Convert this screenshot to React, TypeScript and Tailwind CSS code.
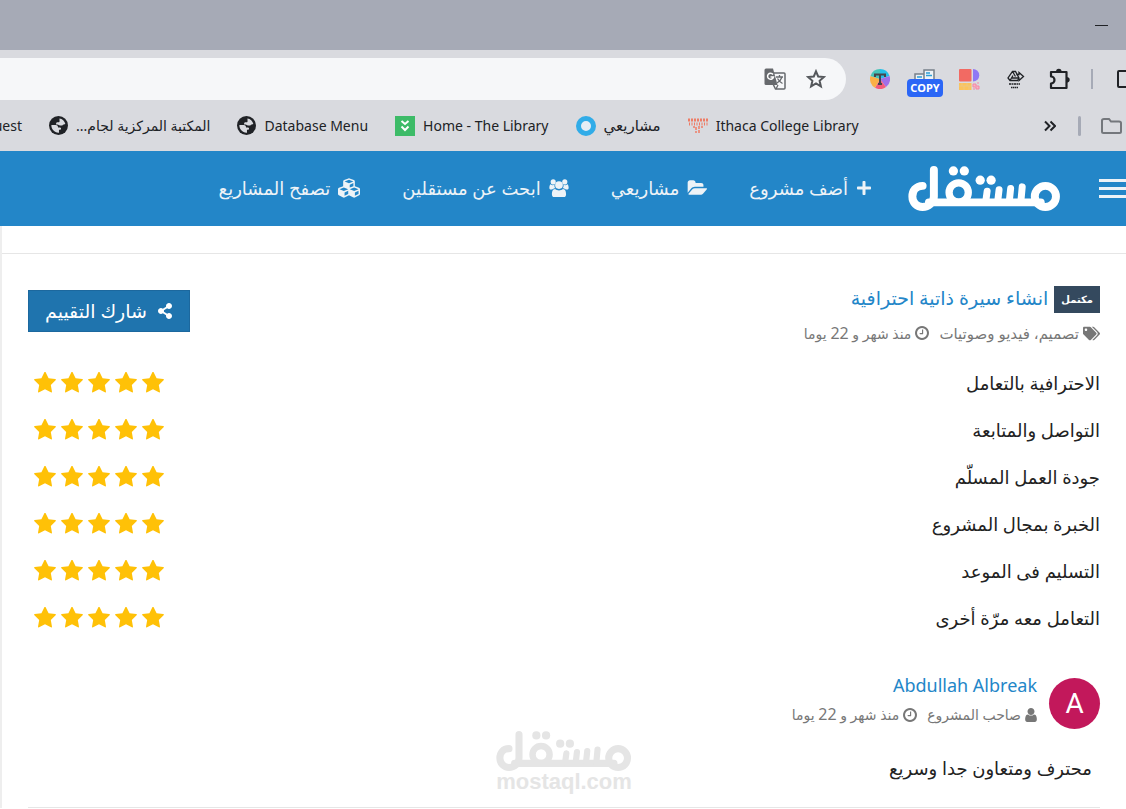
import type { ReactNode } from "react";
import { FaCubes, FaPlus, FaShareAlt, FaTags } from "react-icons/fa";

type IconProps = { className?: string };

const UI_FONT = "font-['Noto_Sans','DejaVu_Sans',sans-serif]";

const Logo = ({ className = "" }: IconProps) => (
  <svg
    viewBox="0 0 460 136"
    className={className}
    fill="none"
    stroke="currentColor"
    strokeLinecap="round"
    aria-hidden="true"
  >
    <circle cx="414" cy="92" r="32" strokeWidth="24" />
    <circle cx="152" cy="80" r="29" strokeWidth="22" />
    <path
      d="M43 60C22 60 12 76 12 92C12 111 26 124 43 124C60 124 77 111 77 92V12M62 110H400"
      strokeWidth="24"
    />
    <path d="M344 63L340 106M309 68L305 106M274 72L270 106M238 76L234 106" strokeWidth="21" />
    <g fill="currentColor" stroke="none">
      <circle cx="136" cy="15" r="14" />
      <circle cx="169" cy="15" r="14" />
      <circle cx="217" cy="43" r="14" />
      <circle cx="250" cy="43" r="14" />
    </g>
  </svg>
);

const Star = ({ className = "" }: IconProps) => (
  <svg viewBox="64 60 1664 1600" className={className} fill="currentColor" aria-hidden="true">
    <path d="M1728 647q0 22-26 48l-363 354 86 500q1 7 1 20 0 21-10.5 35.5t-30.5 14.5q-19 0-40-12l-449-236-449 236q-22 12-40 12-21 0-31.5-14.5t-10.5-35.5q0-6 2-20l86-500-364-354q-25-27-25-48 0-37 56-46l502-73 225-455q19-41 49-41t49 41l225 455 502 73q56 9 56 46z" />
  </svg>
);

const Clock = ({ className = "" }: IconProps) => (
  <svg viewBox="128 128 1536 1536" className={className} fill="currentColor" aria-hidden="true">
    <path d="M1024 544v448q0 14-9 23t-23 9h-320q-14 0-23-9t-9-23v-64q0-14 9-23t23-9h224v-352q0-14 9-23t23-9h64q14 0 23 9t9 23zm416 352q0-148-73-273t-198-198-273-73-273 73-198 198-73 273 73 273 198 198 273 73 273-73 198-198 73-273zm224 0q0 209-103 385.5t-279.5 279.5-385.5 103-385.5-103-279.5-279.5-103-385.5 103-385.5 279.5-279.5 385.5-103 385.5 103 279.5 279.5 103 385.5z" />
  </svg>
);

const Person = ({ className = "" }: IconProps) => (
  <svg viewBox="256 128 1280 1536" className={className} fill="currentColor" aria-hidden="true">
    <path d="M1536 1399q0 109-62.5 187t-150.5 78h-854q-88 0-150.5-78t-62.5-187q0-85 8.5-160.5t31.5-152 58.5-131 94-89 134.5-34.5q131 128 313 128t313-128q76 0 134.5 34.5t94 89 58.5 131 31.5 152 8.5 160.5zm-256-887q0 159-112.5 271.5t-271.5 112.5-271.5-112.5-112.5-271.5 112.5-271.5 271.5-112.5 271.5 112.5 112.5 271.5z" />
  </svg>
);

const FolderOpen = ({ className = "" }: IconProps) => (
  <svg viewBox="0 128 1944 1408" className={className} fill="currentColor" aria-hidden="true">
    <path d="M1943 952q0 31-31 66l-336 396q-43 51-120.5 86.5t-143.5 35.5h-1088q-34 0-60.5-13t-26.5-43q0-31 31-66l336-396q43-51 120.5-86.5t143.5-35.5h1088q34 0 60.5 13t26.5 43zm-343-344v160h-832q-94 0-197 47.5t-164 119.5l-337 396-5 6q0-4-.5-12.5t-.5-12.5v-960q0-92 66-158t158-66h320q92 0 158 66t66 158v32h544q92 0 158 66t66 158z" />
  </svg>
);

const Group = ({ className = "" }: IconProps) => (
  <svg viewBox="0 0 60 56" className={className} fill="currentColor" aria-hidden="true">
    <circle cx="12" cy="9" r="8" />
    <circle cx="48" cy="9" r="8" />
    <circle cx="30" cy="19" r="12" />
    <path d="M4 16C7 20 12 20 16 18C15 23 17 27 19 29C14 29 11 31 9 33H5C1 33 0 30 0 27C0 22 1 18 4 16Z" />
    <path d="M56 16C53 20 48 20 44 18C45 23 43 27 41 29C46 29 49 31 51 33H55C59 33 60 30 60 27C60 22 59 18 56 16Z" />
    <path d="M18 31C25 37 35 37 42 31C50 31 52 40 52 48C52 53 49 56 45 56H15C11 56 8 53 8 48C8 40 10 31 18 31Z" />
  </svg>
);

const Globe = () => (
  <svg viewBox="0 0 20 20" className="size-[19px] shrink-0" aria-hidden="true">
    <circle cx="10" cy="10" r="10" fill="#202226" />
    <path
      d="M11 2.500C14 3 16.500 5 17.200 8.500C16 9 15 9 14 10H11.500C10.500 10 10 9 9 9H7.500V7.500C7.500 6.500 9 6.500 10.500 6.500C11.500 6.500 11 4.500 11 2.500Z"
      fill="#d9dadf"
    />
    <path
      d="M2.500 9.500H7C9 9.500 9.500 10.500 9.500 12H11.500C13 12 13 14 12 14.500H10.500V17.500C6 17.800 2.300 14 2.500 9.500Z"
      fill="#d9dadf"
    />
  </svg>
);

const TranslateIcon = () => (
  <svg viewBox="0 0 22 22" className="size-[22px]" aria-hidden="true">
    <path d="M9 5H20Q21 5 21 6V20Q21 21 20 21H11.500L9 16" fill="none" stroke="#66696d" strokeWidth="1.500" />
    <path d="M2 0.500H9L13.500 17H2Q0.500 17 0.500 15.500V2Q0.500 0.500 2 0.500Z" fill="#66696d" />
    <path d="M9 6.500A3 3 0 1 0 9.500 9H6.500" fill="none" stroke="#fff" strokeWidth="1.500" />
    <path d="M12 9H19M15.500 7V9M18 9C17 12 15 14 13 15M13.500 10.500C15 13 16.500 14.500 18.500 15.500M12 21L14 17" fill="none" stroke="#66696d" strokeWidth="1.300" />
  </svg>
);

const BookmarkStar = () => (
  <svg viewBox="0 0 20 20" className="size-5" fill="none" stroke="#55585c" strokeWidth="2" aria-hidden="true">
    <path d="M10 2.300L12.200 7.500L17.900 8L13.600 11.800L14.900 17.400L10 14.400L5.100 17.400L6.400 11.800L2.100 8L7.800 7.500Z" />
  </svg>
);

const TextIcon = () => (
  <svg viewBox="0 0 20 20" className="size-5" aria-hidden="true">
    <path d="M10 10V0A10 10 0 0 1 19.500 7Z" fill="#25bfe8" />
    <path d="M10 10L19.500 7A10 10 0 0 1 16 18Z" fill="#a06ee8" />
    <path d="M10 10L16 18A10 10 0 0 1 5 18.700Z" fill="#f45b7a" />
    <path d="M10 10L5 18.700A10 10 0 0 1 0.500 7Z" fill="#fbb045" />
    <path d="M10 10L0.500 7A10 10 0 0 1 10 0Z" fill="#46c5b9" />
    <path d="M5 8V5.500H15V8M10 5.500V15M8 15H12" fill="none" stroke="#46464c" strokeWidth="2" />
  </svg>
);

const CopyIcon = () => (
  <span className="flex w-9 flex-col items-center">
    <svg viewBox="0 0 22 10" className="h-[10px] w-[22px]" aria-hidden="true">
      <path d="M1 10V5H10V10M10 10V1H20V10" fill="#eef3f7" stroke="#77808a" strokeWidth="1.500" />
      <path d="M12 4H16M12 6.500H18M3 8H8" stroke="#2d9fd8" strokeWidth="1.500" />
    </svg>
    <span className="h-[18px] w-full rounded bg-[#2b66f6] text-center text-[11px] leading-[18px] font-bold text-white">
      COPY
    </span>
  </span>
);

const BlocksIcon = () => (
  <svg viewBox="0 0 21 21" className="size-[21px]" aria-hidden="true">
    <rect width="12.500" height="12.500" rx="1" fill="#f26a63" />
    <path d="M14 0A6.200 6.200 0 0 1 14 12.500Z" fill="#8f78f4" />
    <rect y="14" width="12.500" height="7" fill="#fbc35c" />
    <path d="M0 17H12M3 14V17M8 14V17M5 17V21M10 17V21" stroke="#e8c88e" strokeWidth="0.700" />
    <path d="M14 15H17V17H20V20H17V18H14ZM18 14H20M14 20H16" stroke="#f387a4" strokeWidth="1" fill="#f9b2c4" />
  </svg>
);

const DriveIcon = () => (
  <svg viewBox="0 0 18 19" className="h-[19px] w-[18px]" fill="none" stroke="#202226" aria-hidden="true">
    <path d="M5.500 1.500H8.500L12 8L10.500 10.500H3L1 8ZM5.500 1.500L8.500 6.500M3 10.500L6 5.500M5 8H12" strokeWidth="1.300" />
    <path d="M9.500 4.500H12V2.500L16.500 6.500L12 10.500V8.500" strokeWidth="1.300" />
    <path d="M2 14H13" strokeWidth="1.500" strokeDasharray="2 0.500" />
    <path d="M4 17.500H11" strokeWidth="1.500" strokeDasharray="1.500 0.500" />
  </svg>
);

const PuzzleIcon = () => (
  <svg viewBox="0 0 22 22" className="size-[22px]" aria-hidden="true">
    <path
      d="M2 4H17.500V20H2V15.500A3.300 3.300 0 0 0 2 8.500Z"
      fill="none"
      stroke="#202226"
      strokeWidth="2.200"
      strokeLinejoin="round"
    />
    <path d="M7 4A2.800 3.200 0 0 1 12.600 4ZM17.500 9A3.200 2.800 0 0 1 17.500 14.600Z" fill="#202226" />
  </svg>
);

const Toolbar = () => (
  <div className="flex h-[58px] items-center overflow-hidden">
    <div className="flex h-[42px] flex-1 items-center justify-end gap-5 rounded-r-full bg-[#f6f7f9] pr-5">
      <button type="button" aria-label="Translate this page">
        <TranslateIcon />
      </button>
      <button type="button" aria-label="Bookmark this tab">
        <BookmarkStar />
      </button>
    </div>
    <div className="flex w-[280px] shrink-0 items-center pl-6">
      <button type="button" aria-label="Text tools" className="mr-[17px] shrink-0">
        <TextIcon />
      </button>
      <button type="button" className="mt-2 mr-4 shrink-0">
        <CopyIcon />
      </button>
      <button type="button" aria-label="Blocks" className="mr-[27px] shrink-0">
        <BlocksIcon />
      </button>
      <button type="button" aria-label="Preview export" className="mr-6 shrink-0">
        <DriveIcon />
      </button>
      <button type="button" aria-label="Extensions" className="mr-5 shrink-0">
        <PuzzleIcon />
      </button>
      <span className="mr-6 h-5 w-0.5 shrink-0 bg-[#a6aab6]" />
      <button type="button" aria-label="Side panel" className="h-[18px] w-5 shrink-0 rounded-xs border-2 border-[#202226]" />
    </div>
  </div>
);

const Bookmark = ({ icon, children }: { icon: ReactNode; children: ReactNode }) => (
  <a href="#" className="flex shrink-0 items-center gap-2 whitespace-nowrap">
    {icon}
    {children}
  </a>
);

const BookmarksBar = () => (
  <div className="flex h-[43px] items-center justify-between overflow-hidden pb-[7px] text-sm text-[#202226]">
    <div className="flex items-center gap-[27px]">
      <a href="#" className="flex w-[22px] shrink-0 justify-end">
        uest
      </a>
      <Bookmark icon={<Globe />}>
        <span dir="rtl">المكتبة المركزية لجام...</span>
      </Bookmark>
      <Bookmark icon={<Globe />}>Database Menu</Bookmark>
      <Bookmark
        icon={
          <svg viewBox="0 0 20 20" className="size-5" aria-hidden="true">
            <rect width="20" height="20" fill="#3dbb68" />
            <path d="M6.500 5L10 8L13.500 5M6.500 10.500L10 14L13.500 10.500" fill="none" stroke="#fff" strokeWidth="2" />
          </svg>
        }
      >
        Home - The Library
      </Bookmark>
      <Bookmark icon={<span className="size-5 rounded-full border-[5px] border-[#31ace8] bg-[#e6edf5]" />}>
        <span dir="rtl" className="text-[15px]">
          مشاريعي
        </span>
      </Bookmark>
      <Bookmark
        icon={
          <svg viewBox="0 0 20 16" className="h-4 w-5" fill="none" stroke="#ee7c66" aria-hidden="true">
            <path d="M0 2H20" strokeWidth="3" strokeDasharray="2 1" />
            <path d="M1 6H20" strokeWidth="3" strokeDasharray="1 1.500" />
            <path d="M8 9V15M11 8V15M14 8V10M6 8V10" strokeWidth="1.500" strokeDasharray="3 1" />
          </svg>
        }
      >
        Ithaca College Library
      </Bookmark>
    </div>
    <div className="flex shrink-0 items-center pr-1">
      <button type="button" aria-label="More bookmarks" className="mr-[22px]">
        <svg viewBox="0 0 12 12" className="size-3" fill="none" stroke="#202226" strokeWidth="2" aria-hidden="true">
          <path d="M1 1.500L5.500 6L1 10.500M6.500 1.500L11 6L6.500 10.500" />
        </svg>
      </button>
      <span className="mr-5 h-5 w-[3px] rounded-full bg-[#a6aab6]" />
      <button type="button" aria-label="All bookmarks">
        <svg viewBox="0 0 21 16" className="h-4 w-[21px]" fill="none" stroke="#74777c" strokeWidth="2" aria-hidden="true">
          <path d="M3 1H8L10 3.500H18Q20 3.500 20 5V13.500Q20 15 18.500 15H2.500Q1 15 1 13.500V2.500Q1 1 3 1Z" />
        </svg>
      </button>
    </div>
  </div>
);

const navItems = [
  { label: "أضف مشروع", icon: <FaPlus className="size-4" /> },
  { label: "مشاريعي", icon: <FolderOpen className="h-[15px] w-5" /> },
  { label: "ابحث عن مستقلين", icon: <Group className="h-[18px] w-5" /> },
  { label: "تصفح المشاريع", icon: <FaCubes className="size-[22px]" /> },
];

const SiteHeader = () => (
  <header className="flex h-[75px] items-center overflow-hidden bg-[#2386c8] text-[#eef3f7]">
    <button type="button" aria-label="القائمة" className="flex w-[27px] shrink-0 flex-col gap-[5px]">
      <span className="h-[3px] bg-current" />
      <span className="h-[3px] bg-current" />
      <span className="h-[3px] bg-current" />
    </button>
    <a href="#" aria-label="مستقل" className="ms-[38px] shrink-0 text-white">
      <Logo className="h-[45px] w-[153px]" />
    </a>
    <nav className="ms-9 flex gap-[42px] pb-0.5">
      {navItems.map((item) => (
        <a key={item.label} href="#" className="flex items-center gap-2 text-lg leading-7 whitespace-nowrap">
          {item.icon}
          {item.label}
        </a>
      ))}
    </nav>
  </header>
);

const ratings = [
  "الاحترافية بالتعامل",
  "التواصل والمتابعة",
  "جودة العمل المسلّم",
  "الخبرة بمجال المشروع",
  "التسليم فى الموعد",
  "التعامل معه مرّة أخرى",
];

const RatingRow = ({ label }: { label: string }) => (
  <li className="flex h-[47px] items-center justify-between">
    <span>{label}</span>
    <span className="flex gap-[5px] px-1.5" role="img" aria-label="5 من 5">
      {[1, 2, 3, 4, 5].map((n) => (
        <Star key={n} className="h-[21px] w-[22px] text-[#ffc107]" />
      ))}
    </span>
  </li>
);

const PostedAt = () => (
  <span className="flex items-center gap-1">
    <Clock className="size-[14px]" />
    <span>
      منذ شهر و <span className="text-base leading-5">22</span> يوما
    </span>
  </span>
);

const Review = () => (
  <article className="mx-[26px] border-b border-[#e6e6e6] pb-3.5">
    <div className="flex items-start justify-between pt-8">
      <div>
        <h2 className="flex items-start gap-1.5 text-[19px] leading-6 text-[#2386c8]">
          <span className="h-[27px] bg-[#34495e] px-[7px] text-[10px] leading-[26px] font-bold text-white">
            مكتمل
          </span>
          <a href="#">انشاء سيرة ذاتية احترافية</a>
        </h2>
        <div className="mt-2 flex h-6 items-center gap-2.5 text-sm leading-5 text-[#777]">
          <span className="flex items-center gap-1 text-[15px]">
            <FaTags className="size-[17px]" />
            تصميم، فيديو وصوتيات
          </span>
          <PostedAt />
        </div>
      </div>
      <button
        type="button"
        className="mt-1 flex h-[42px] items-center gap-2.5 border border-[#1c689e] bg-[#1f74ae] px-4 text-[19px] text-white"
      >
        <FaShareAlt className="size-4" />
        شارك التقييم
      </button>
    </div>

    <ul className="mt-[14px] text-lg">
      {ratings.map((label) => (
        <RatingRow key={label} label={label} />
      ))}
    </ul>

    <div className="mt-[37px] flex items-center gap-3">
      <span className="flex size-[51px] shrink-0 items-center justify-center rounded-full bg-[#c2185b] font-['Roboto',sans-serif] text-[28px] text-white">
        A
      </span>
      <div className="-mt-2.5">
        <a href="#" className="block text-lg leading-7 text-[#2386c8]">
          Abdullah Albreak
        </a>
        <div className="mt-1 flex h-6 items-center gap-2.5 text-sm leading-5 text-[#777]">
          <span className="flex items-center gap-1">
            <Person className="h-[14px] w-3" />
            صاحب المشروع
          </span>
          <PostedAt />
        </div>
      </div>
    </div>

    <div className="mt-0.5 grid grid-cols-3 items-center">
      <p className="ps-2 pt-3 text-lg whitespace-nowrap">محترف ومتعاون جدا وسريع</p>
      <div dir="ltr" className="flex flex-col items-center text-[#e5e5e5]">
        <Logo className="h-10 w-[136px]" />
        <span className="font-['Liberation_Sans',sans-serif] text-[22px] leading-[22px] font-bold">mostaql.com</span>
      </div>
    </div>
  </article>
);

export default function App() {
  return (
    <div className={`min-h-screen overflow-hidden bg-white text-[#222] ${UI_FONT}`}>
      {/* Browser window */}
      <div className="flex h-[50px] items-center justify-end bg-[#a6aab6] pr-[18px]">
        <button type="button" aria-label="Minimize" className="h-px w-[13px] bg-[#202226]" />
      </div>
      <div className="bg-[#d9dadf]">
        <Toolbar />
        <BookmarksBar />
      </div>

      {/* Page */}
      <div dir="rtl">
        <SiteHeader />
        <main className="border-l-2 border-[#eee]">
          <div className="h-7 border-b border-[#e6e6e6]" />
          <Review />
        </main>
      </div>
    </div>
  );
}
